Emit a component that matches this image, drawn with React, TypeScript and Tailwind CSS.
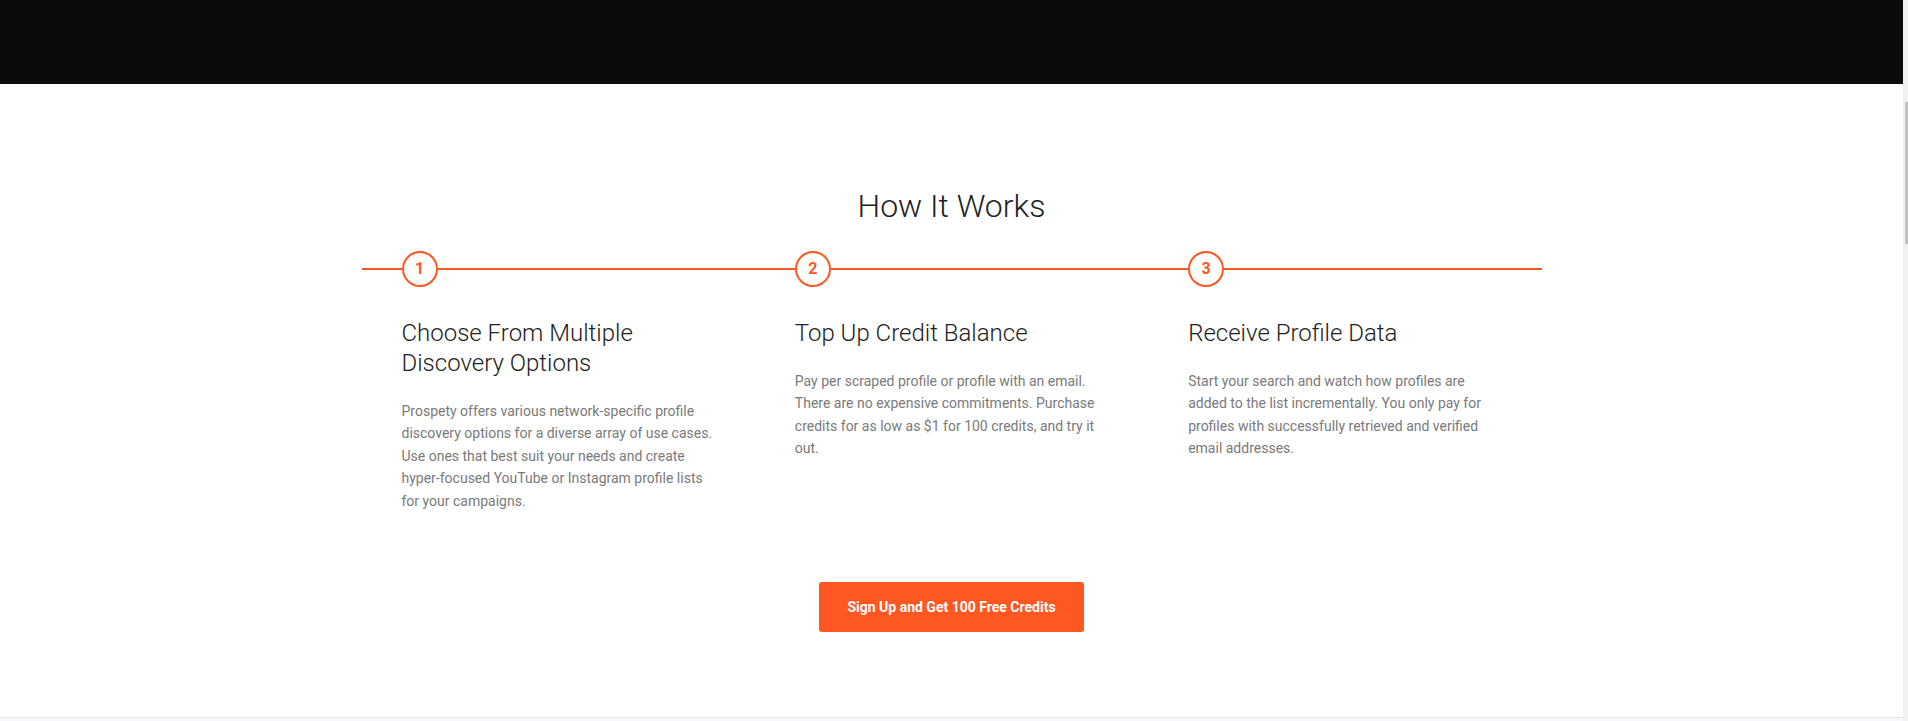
import React from "react";

const steps = [
  {
    n: "1",
    title: "Choose From Multiple Discovery Options",
    text: "Prospety offers various network-specific profile discovery options for a diverse array of use cases. Use ones that best suit your needs and create hyper-focused YouTube or Instagram profile lists for your campaigns.",
  },
  {
    n: "2",
    title: "Top Up Credit Balance",
    text: "Pay per scraped profile or profile with an email. There are no expensive commitments. Purchase credits for as low as $1 for 100 credits, and try it out.",
  },
  {
    n: "3",
    title: "Receive Profile Data",
    text: "Start your search and watch how profiles are added to the list incrementally. You only pay for profiles with successfully retrieved and verified email addresses.",
  },
];

export default function App() {
  return (
    <div
      className="flex w-[1908px] h-[721px] overflow-hidden bg-white"
      style={{ fontFamily: "Roboto, 'Liberation Sans', sans-serif" }}
    >
      <div className="flex flex-col w-[1903px]">
        <header className="h-[84px] bg-[#0b0b0b] shrink-0" />
        <section className="flex flex-col items-center pt-[100px] h-[633px] shrink-0">
          <h2 className="text-[32px] leading-[44px] font-light text-[#222222]">How It Works</h2>
          <div className="grid grid-cols-3 w-[1180px] mt-[23px]">
            {steps.map((s) => (
              <div key={s.n} className="flex flex-col">
                <div className="flex items-center h-[36px]">
                  <div className="w-[40px] h-[2px] bg-[#ff5722]" />
                  <div className="w-[36px] h-[36px] rounded-full border-2 border-[#ff5722] flex items-center justify-center text-[#ff5722] text-[16px] font-bold shrink-0">
                    {s.n}
                  </div>
                  <div className="flex-1 h-[2px] bg-[#ff5722]" />
                </div>
                <div className="pl-[40px] pt-[31px]">
                  <h3 className="max-w-[315px] text-[24px] leading-[30px] font-light text-[#222222]">
                    {s.title}
                  </h3>
                  <p className="max-w-[315px] mt-[22px] text-[14px] leading-[22.4px] text-[#7a7a7a]">
                    {s.text}
                  </p>
                </div>
              </div>
            ))}
          </div>
          <button className="mt-[70px] h-[50px] px-[28px] rounded-[3px] bg-[#ff5722] text-white text-[14px] font-bold">
            Sign Up and Get 100 Free Credits
          </button>
        </section>
        <div className="border-t border-[#e3e3ec] bg-[#f8f8fc] flex-1" />
      </div>
      <div className="w-[5px] h-[721px] bg-[#f1f1f1] pt-[102px] pl-[2px]">
        <div className="w-[3px] h-[142px] bg-[#c1c1c1]" />
      </div>
    </div>
  );
}
